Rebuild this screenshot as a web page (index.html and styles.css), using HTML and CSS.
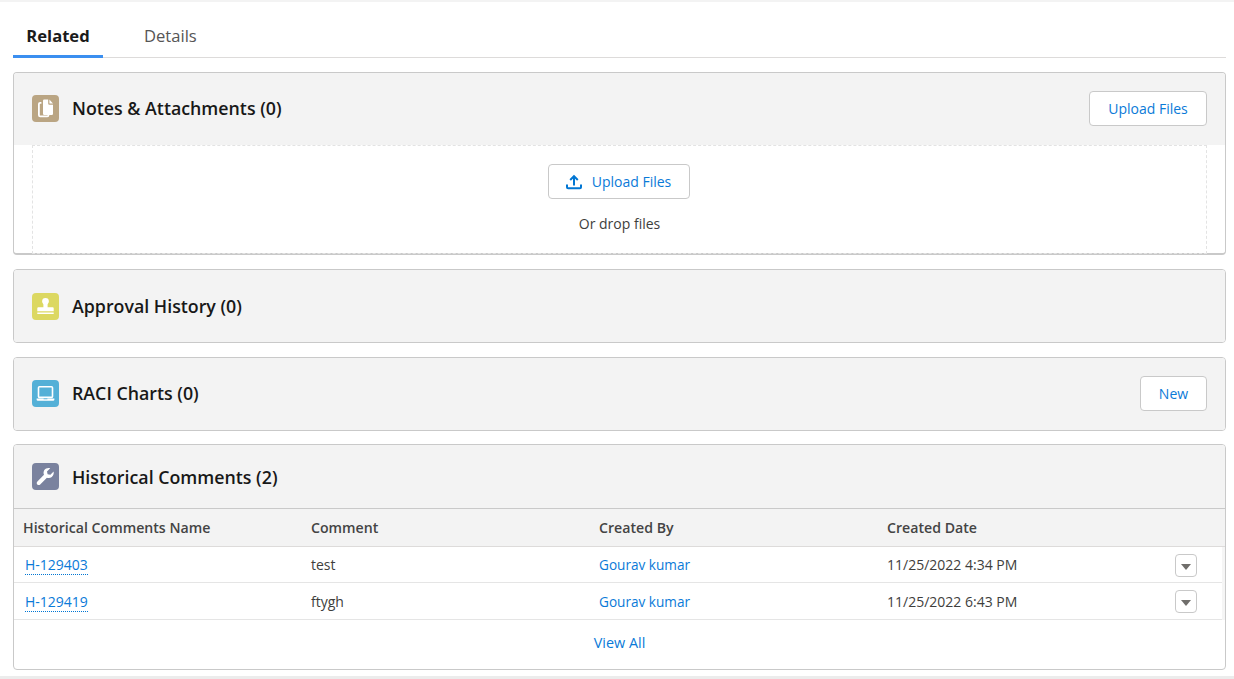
FILE: index.html
```html
<!DOCTYPE html>
<html lang="en">
<head>
    <meta charset="UTF-8">
    <meta name="viewport" content="width=device-width, initial-scale=1.0">
    <title>Related</title>
    <link rel="stylesheet" href="styles.css">
</head>
<body>
    <main class="page">
        <nav class="tabs">
            <a class="tab tab-active">Related</a>
            <a class="tab">Details</a>
        </nav>

        <section class="card card-notes">
            <header class="card-head card-head-action">
                <span class="icon icon-notes">
                    <svg viewBox="0 0 27 27" width="27" height="27">
                        <path fill="none" stroke="#fff" stroke-width="1.8" d="M9.4 7.8H8.2Q6.9 7.8 6.9 9.1V20Q6.9 21.4 8.2 21.4H15.2Q16.5 21.4 16.5 20V20"/>
                        <path fill="#fff" d="M12.2 4.5H16.2V8.6Q16.2 9.8 17.4 9.8H21V18.8Q21 20 19.8 20H12.2Q11 20 11 18.8V5.7Q11 4.5 12.2 4.5ZM17.4 4.5L21 8.5H18Q17.4 8.5 17.4 7.9Z"/>
                    </svg>
                </span>
                <h2 class="card-title">Notes &amp; Attachments (0)</h2>
                <button class="btn btn-upload" type="button">Upload Files</button>
            </header>
            <div class="dropzone">
                <button class="btn btn-drop" type="button">
                    <svg viewBox="0 0 16 16" width="16" height="16">
                        <path fill="none" stroke="#0176d3" stroke-width="2" d="M1 10.5V13.2Q1 14.3 2.1 14.3H13.9Q15 14.3 15 13.2V10.5M8 11.4V2.6M4.2 6L8 2.2L11.8 6"/>
                    </svg>
                    Upload Files
                </button>
                <p class="drop-text">Or drop files</p>
            </div>
        </section>

        <section class="card card-plain">
            <header class="card-head">
                <span class="icon icon-approval">
                    <svg viewBox="0 0 27 27" width="27" height="27">
                        <path fill="#fff" d="M13.5 5A3.4 3.4 0 0 1 16.9 8.4C16.9 9.8 15.6 10.4 15.6 11.6V14.3H20.7Q21.7 14.3 21.7 15.3V18.2H5.3V15.3Q5.3 14.3 6.3 14.3H11.4V11.6C11.4 10.4 10.1 9.8 10.1 8.4A3.4 3.4 0 0 1 13.5 5ZM5.3 19.4H21.7V21H5.3Z"/>
                    </svg>
                </span>
                <h2 class="card-title">Approval History (0)</h2>
            </header>
        </section>

        <section class="card card-plain">
            <header class="card-head card-head-action">
                <span class="icon icon-raci">
                    <svg viewBox="0 0 27 27" width="27" height="27">
                        <rect x="6.5" y="6.8" width="14" height="10.6" rx="1" fill="none" stroke="#fff" stroke-width="1.6"/>
                        <path fill="#fff" d="M4.6 18.6H11.6V19.3H15.4V18.6H22.4V19.4Q22.4 20.7 21.1 20.7H5.9Q4.6 20.7 4.6 19.4Z"/>
                    </svg>
                </span>
                <h2 class="card-title">RACI Charts (0)</h2>
                <button class="btn btn-new" type="button">New</button>
            </header>
        </section>

        <section class="card card-table">
            <header class="card-head">
                <span class="icon icon-history">
                    <svg viewBox="0 0 27 27" width="27" height="27">
                        <path fill="#fff" d="M21.6 8.6L18.4 11.8L15.6 11.2L15 8.4L18.2 5.2C15.8 4.6 13.4 5.4 12.2 7.3C11.4 8.8 11.4 10.4 12 11.8L5.4 18.5C4.5 19.4 4.5 20.6 5.3 21.4C6.1 22.2 7.4 22.2 8.2 21.4L14.9 14.7C16.6 15.3 18.4 15.1 19.8 13.9C21.4 12.6 22.1 10.6 21.6 8.6Z"/>
                    </svg>
                </span>
                <h2 class="card-title">Historical Comments (2)</h2>
            </header>
            <div class="table">
                <div class="row row-head">
                    <span class="cell cell-head">Historical Comments Name</span>
                    <span class="cell cell-head">Comment</span>
                    <span class="cell cell-head">Created By</span>
                    <span class="cell cell-head">Created Date</span>
                </div>
                <div class="row">
                    <span class="cell"><a class="record-link">H-129403</a></span>
                    <span class="cell">test</span>
                    <span class="cell"><a class="user-link">Gourav kumar</a></span>
                    <span class="cell">11/25/2022 4:34 PM</span>
                    <button class="row-menu" type="button"><i class="caret"></i></button>
                </div>
                <div class="row">
                    <span class="cell"><a class="record-link">H-129419</a></span>
                    <span class="cell">ftygh</span>
                    <span class="cell"><a class="user-link">Gourav kumar</a></span>
                    <span class="cell">11/25/2022 6:43 PM</span>
                    <button class="row-menu" type="button"><i class="caret"></i></button>
                </div>
            </div>
            <a class="view-all">View All</a>
        </section>
    </main>
    <div class="bottom-bar"></div>
</body>
</html>
```

FILE: styles.css
```css
* {
    box-sizing: border-box;
}
html, body {
    margin: 0;
    height: 679px;
    overflow: hidden;
}
body {
    display: flex;
    flex-direction: column;
    background-color: white;
    font-family: "Open Sans", "Noto Sans", sans-serif;
    font-size: 14px;
    color: #3e3e3c;
    border-top: 2px solid #f3f3f3;
}
.page {
    flex: 1;
    display: flex;
    flex-direction: column;
    padding: 0 8px 0 13px;
}
.tabs {
    display: flex;
    height: 56px;
    border-bottom: 1px solid #dddbda;
    margin-bottom: 14px;
}
.tab {
    display: flex;
    align-items: center;
    justify-content: center;
    height: 56px;
    padding: 19px 13px 6px;
    margin-right: 28px;
    font-size: 16.6px;
    color: #555;
    border-bottom: 3px solid transparent;
}
.tab-active {
    width: 90px;
    font-weight: 700;
    color: #1b1b1b;
    border-bottom-color: #3b8ff0;
}
.card {
    border: 1px solid #c9c9c9;
    border-radius: 4px;
    margin-bottom: 14px;
    background-color: white;
}
.card-notes {
    height: 183px;
    border-bottom-width: 2px;
}
.card-plain {
    height: 74px;
}
.card-plain .card-head {
    height: 72px;
    border-radius: 3px;
}
.card-table {
    height: 226px;
    margin-bottom: 0;
    margin-top: -1px;
}
.card-head {
    display: flex;
    align-items: center;
    height: 72px;
    padding: 0 18px;
    background-color: #f3f3f3;
    border-radius: 3px 3px 0 0;
}
.card-head-action {
    padding-bottom: 2px;
}
.card-table .card-head {
    height: 64px;
    border-bottom: 1px solid #c9c9c9;
}
.icon {
    flex: none;
    width: 27px;
    height: 27px;
    border-radius: 4px;
    margin-right: 13px;
    display: flex;
}
.icon-notes { background-color: #baa583; }
.icon-approval { background-color: #dcd861; }
.icon-raci { background-color: #54b0d7; }
.icon-history { background-color: #7a829e; }
.card-title {
    flex: 1;
    margin: 0;
    font-size: 17.8px;
    font-weight: 600;
    color: #181818;
}
.btn {
    display: flex;
    align-items: center;
    justify-content: center;
    height: 35px;
    border: 1px solid #c9c9c9;
    border-radius: 4px;
    background-color: white;
    color: #0a7ad8;
    font-family: inherit;
    font-size: 14px;
    padding: 0;
}
.btn-upload { width: 118px; }
.btn-new { width: 67px; }
.btn-drop {
    width: 142px;
    gap: 10px;
    margin-right: 2px;
}
.dropzone {
    height: 109px;
    margin: 0 18px;
    border: 1px dashed #e3e3e3;
    display: flex;
    flex-direction: column;
    align-items: center;
    padding-top: 18px;
}
.drop-text {
    margin: 15px 0 0;
    color: #3e3e3c;
}
.table {
    background-color: #f5f5f5;
}
.row {
    position: relative;
    display: grid;
    grid-template-columns: repeat(3, 288px) 1fr;
    align-items: center;
    height: 36px;
    margin-right: 3px;
    padding-left: 9px;
    background-color: white;
    border-bottom: 1px solid #e5e5e5;
}
.row-head {
    height: 38px;
    margin-right: 0;
    background-color: #f3f3f3;
    border-bottom-color: #dddbda;
}
.row + .row + .row {
    height: 37px;
}
.cell-head {
    font-size: 14.15px;
    font-weight: 600;
    color: #444;
}
.record-link {
    margin-left: 2px;
    color: #0a7ad8;
    border-bottom: 1px dotted #0176d3;
}
.user-link {
    font-size: 13.6px;
    color: #0a7ad8;
}
.row-menu {
    position: absolute;
    top: 7px;
    right: 25px;
    width: 22px;
    height: 23px;
    padding: 0;
    border: 1px solid #c9c9c9;
    border-radius: 4px;
    background-color: white;
    display: flex;
    align-items: center;
    justify-content: center;
}
.caret {
    width: 0;
    height: 0;
    margin-top: 2px;
    border-left: 5px solid transparent;
    border-right: 5px solid transparent;
    border-top: 6px solid #706e6b;
}
.view-all {
    display: block;
    text-align: center;
    font-size: 14.4px;
    color: #0a7ad8;
    padding-top: 13px;
}
.bottom-bar {
    flex: none;
    height: 3px;
    background-color: #ececec;
}
```
